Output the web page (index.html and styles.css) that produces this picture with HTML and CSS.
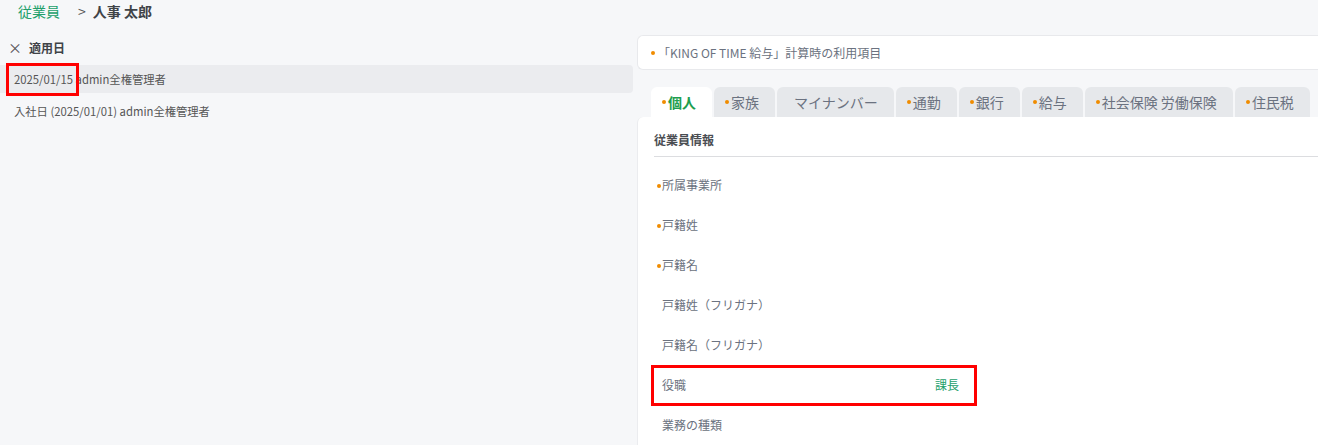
FILE: index.html
```html
<!DOCTYPE html>
<html lang="ja">
<head>
    <meta charset="UTF-8">
    <title>人事 太郎 - 従業員</title>
    <meta name="viewport" content="width=device-width, initial-scale=1.0">
    <link rel="stylesheet" href="styles.css">
</head>
<body>
    <div class="breadcrumb">
        <a class="crumb-link" href="#">従業員</a>
        <span class="crumb-sep">&gt;</span>
        <span class="crumb-current">人事 太郎</span>
    </div>

    <div class="page">
        <div class="history">
            <div class="history-head">
                <span class="close">×</span>
                <span>適用日</span>
            </div>
            <div class="history-row selected"><span class="marked date">2025/01/15</span> admin全権管理者</div>
            <div class="history-row">入社日 (2025/01/01) admin全権管理者</div>
        </div>

        <div class="detail">
            <div class="notice">
                <span class="dot"></span>「KING OF TIME 給与」計算時の利用項目
            </div>

            <div class="tabs">
                <div class="tab active"><span class="dot"></span>個人</div>
                <div class="tab"><span class="dot"></span>家族</div>
                <div class="tab"><span class="dot blank"></span>マイナンバー</div>
                <div class="tab"><span class="dot"></span>通勤</div>
                <div class="tab"><span class="dot"></span>銀行</div>
                <div class="tab"><span class="dot"></span>給与</div>
                <div class="tab"><span class="dot"></span>社会保険 労働保険</div>
                <div class="tab"><span class="dot"></span>住民税</div>
            </div>

            <div class="panel">
                <div class="section-title">従業員情報</div>
                <div class="field"><span class="req"><span class="dot"></span></span><span class="label">所属事業所</span><span class="value"></span></div>
                <div class="field"><span class="req"><span class="dot"></span></span><span class="label">戸籍姓</span><span class="value"></span></div>
                <div class="field"><span class="req"><span class="dot"></span></span><span class="label">戸籍名</span><span class="value"></span></div>
                <div class="field"><span class="req"></span><span class="label">戸籍姓（フリガナ）</span><span class="value"></span></div>
                <div class="field"><span class="req"></span><span class="label">戸籍名（フリガナ）</span><span class="value"></span></div>
                <div class="field marked-row"><span class="req"></span><span class="label">役職</span><span class="value">課長</span></div>
                <div class="field"><span class="req"></span><span class="label">業務の種類</span><span class="value"></span></div>
            </div>
        </div>
    </div>
</body>
</html>
```

FILE: styles.css
```css
body {
    font-family: "Noto Sans CJK JP", "Noto Sans", sans-serif;
    margin: 0;
    color: #555;
    background-color: #f6f7f9;
    width: 1318px;
    height: 445px;
    overflow: hidden;
}
.breadcrumb {
    display: flex;
    align-items: center;
    height: 22px;
    padding-left: 18px;
    font-size: 14px;
}
.crumb-link {
    color: #22a06b;
    text-decoration: none;
}
.crumb-sep {
    margin: 0 7px 0 18px;
    color: #555;
    font-size: 14px;
}
.crumb-current {
    font-weight: bold;
    color: #3f4348;
}
.page {
    display: flex;
    gap: 4px;
    margin-top: 14px;
}

/* left column: applied date history */
.history {
    width: 633px;
    flex: none;
}
.history-head {
    display: flex;
    align-items: center;
    gap: 7px;
    height: 22px;
    padding-left: 8px;
    font-size: 12px;
    font-weight: bold;
    color: #3f4348;
}
.history-head .close {
    font-weight: normal;
    font-size: 14px;
    color: #555;
}
.history-row {
    height: 28px;
    line-height: 28px;
    padding-left: 14px;
    margin-bottom: 4px;
    font-size: 11.3px;
    color: #555;
    white-space: nowrap;
}
.history-row.selected {
    margin-top: 7px;
    background-color: #ebecef;
    border-radius: 0 4px 4px 0;
}
.marked {
    position: relative;
}
.marked.date::after {
    content: "";
    position: absolute;
    left: -8px;
    right: -6px;
    top: -8px;
    bottom: -9px;
    border: 3px solid #f00;
}

/* right column: employee detail */
.detail {
    flex: none;
    width: 700px;
    margin-top: -1px;
}
.notice {
    display: flex;
    align-items: center;
    height: 33px;
    padding-left: 13px;
    background-color: #fff;
    border: 1px solid #e8e9ec;
    border-right: none;
    border-radius: 6px 0 0 6px;
    font-size: 12px;
    color: #6b7280;
}
.notice .dot {
    margin-right: 3px;
}
.dot {
    display: inline-block;
    width: 4px;
    height: 4px;
    border-radius: 50%;
    background-color: #f08c00;
    margin-right: 2px;
    vertical-align: middle;
}
.dot.blank {
    background-color: transparent;
}
.tabs {
    display: flex;
    gap: 2px;
    margin-top: 17px;
    padding-left: 14px;
}
.tab {
    display: flex;
    align-items: center;
    height: 30px;
    padding: 0 16px 0 11px;
    background-color: #e6e8eb;
    border-radius: 6px 6px 0 0;
    font-size: 14px;
    color: #6b7280;
    white-space: nowrap;
}
.tab.active {
    background-color: #fff;
    color: #1e9e4f;
    font-weight: bold;
}
.panel {
    background-color: #fff;
    border-radius: 6px 0 0 0;
    border-left: 1px solid #ebecef;
    padding: 0 0 0 16px;
    height: 330px;
}
.section-title {
    display: flex;
    align-items: center;
    height: 33px;
    padding-top: 6px;
    font-size: 12px;
    font-weight: bold;
    color: #4a4d52;
    border-bottom: 1px solid #dcdde0;
    margin-bottom: 7px;
}
.field {
    display: flex;
    align-items: center;
    height: 40px;
    font-size: 12px;
    color: #6b7280;
}
.field .req {
    width: 8px;
    flex: none;
}
.field .req .dot {
    margin: 0 0 1px 3px;
}
.field .label {
    width: 273px;
    flex: none;
}
.field .value {
    color: #22a06b;
    font-size: 12px;
}
.marked-row {
    position: relative;
}
.marked-row::after {
    content: "";
    position: absolute;
    left: -3px;
    width: 326px;
    top: 1px;
    bottom: -2px;
    box-sizing: border-box;
    border: 3px solid #f00;
}
```
